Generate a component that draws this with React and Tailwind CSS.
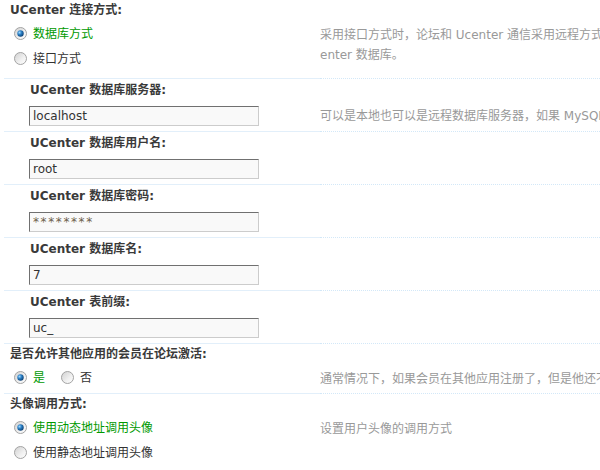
import React from "react";

function Radio({ checked }) {
  return (
    <svg width="13" height="13" viewBox="0 0 13 13" className="shrink-0">
      <defs>
        <linearGradient id="rgbg" x1="0" y1="0" x2="1" y2="1">
          <stop offset="0" stopColor="#cfcfcf" />
          <stop offset="0.6" stopColor="#f1f1f1" />
          <stop offset="1" stopColor="#ffffff" />
        </linearGradient>
        <radialGradient id="rgdot" cx="0.35" cy="0.35" r="0.7">
          <stop offset="0" stopColor="#9fd8ff" />
          <stop offset="0.45" stopColor="#2a7fc4" />
          <stop offset="1" stopColor="#0c3f73" />
        </radialGradient>
      </defs>
      <circle cx="6.5" cy="6.5" r="6" fill="url(#rgbg)" stroke="#a3a3a3" strokeWidth="1" />
      {checked && <circle cx="6.5" cy="6.5" r="3.2" fill="url(#rgdot)" />}
    </svg>
  );
}

function GroupHeader({ children, sub }) {
  return (
    <div
      className={
        sub
          ? "h-[23px] leading-[23px] pl-[26px] font-bold text-[#3a3a3a] whitespace-nowrap"
          : "h-[21px] leading-[21px] pl-[6px] font-bold text-[#3a3a3a] whitespace-nowrap"
      }
    >
      {children}
    </div>
  );
}

function Desc({ lines }) {
  return (
    <div className="flex-1 min-w-0 border-b border-dotted border-[#d3e8f8] pt-[4px] leading-[20px] text-[#999] whitespace-nowrap overflow-hidden">
      {lines.map((l, i) => (
        <div key={i}>{l}</div>
      ))}
    </div>
  );
}

function InputGroup({ label, value, desc, password }) {
  return (
    <div>
      <GroupHeader sub>{label}</GroupHeader>
      <div className="flex">
        <div className="w-[316px] shrink-0 border-b border-[#e2effa] pl-[25px] pt-[4px] pb-[5px]">
          <input
            readOnly
            value={value}
            className={
              password
                ? "block w-[230px] h-[20px] px-[3px] bg-[#f9f9f9] text-[#6e5f4c] tracking-[1.6px] text-[12px] outline-none border border-t-[#707070] border-l-[#707070] border-r-[#cccccc] border-b-[#cccccc]"
                : "block w-[230px] h-[20px] px-[3px] bg-[#f9f9f9] text-[#333] text-[12px] outline-none border border-t-[#707070] border-l-[#707070] border-r-[#cccccc] border-b-[#cccccc]"
            }
          />
        </div>
        <Desc lines={desc ? [desc] : []} />
      </div>
    </div>
  );
}

export default function App() {
  return (
    <div className="w-[600px] h-[470px] overflow-hidden bg-white text-[12px] font-['DejaVu_Sans','Noto_Sans_CJK_SC',sans-serif]">
      <div className="pl-[4px] w-[900px]">
        {/* Group 1 */}
        <GroupHeader>UCenter 连接方式:</GroupHeader>
        <div className="flex">
          <div className="w-[316px] shrink-0 border-b border-[#e2effa] pb-[7px]">
            <ul>
              <li className="h-[25px] flex items-center pl-[10px]">
                <Radio checked />
                <span className="ml-[6px] text-[#009900]">数据库方式</span>
              </li>
              <li className="h-[25px] flex items-center pl-[10px]">
                <Radio />
                <span className="ml-[6px] text-[#333]">接口方式</span>
              </li>
            </ul>
          </div>
          <Desc
            lines={[
              "采用接口方式时，论坛和 Ucenter 通信采用远程方式，如果您的服务器不支持请选择数据库方式直接连接 Uc",
              "enter 数据库。",
            ]}
          />
        </div>

        <InputGroup
          label="UCenter 数据库服务器:"
          value="localhost"
          desc="可以是本地也可以是远程数据库服务器，如果 MySQL 端口不是默认的 3306，请填写如下形式：127.0.0.1:6033"
        />
        <InputGroup label="UCenter 数据库用户名:" value="root" />
        <InputGroup label="UCenter 数据库密码:" value="********" password />
        <InputGroup label="UCenter 数据库名:" value="7" />
        <InputGroup label="UCenter 表前缀:" value="uc_" />

        {/* Group 7 */}
        <GroupHeader>是否允许其他应用的会员在论坛激活:</GroupHeader>
        <div className="flex">
          <div className="w-[316px] shrink-0 border-b border-[#e2effa] pb-[3px]">
            <div className="h-[25px] flex items-center pl-[10px]">
              <Radio checked />
              <span className="ml-[6px] text-[#009900]">是</span>
              <span className="ml-[16px]">
                <Radio />
              </span>
              <span className="ml-[6px] text-[#333]">否</span>
            </div>
          </div>
          <Desc
            lines={[
              "通常情况下，如果会员在其他应用注册了，但是他还不是本论坛的会员，那么他在论坛登录时需要激活",
            ]}
          />
        </div>

        {/* Group 8 */}
        <GroupHeader>头像调用方式:</GroupHeader>
        <div className="flex">
          <div className="w-[316px] shrink-0 border-b border-[#e2effa] pb-[7px]">
            <ul>
              <li className="h-[25px] flex items-center pl-[10px]">
                <Radio checked />
                <span className="ml-[6px] text-[#009900]">使用动态地址调用头像</span>
              </li>
              <li className="h-[25px] flex items-center pl-[10px]">
                <Radio />
                <span className="ml-[6px] text-[#333]">使用静态地址调用头像</span>
              </li>
            </ul>
          </div>
          <Desc lines={["设置用户头像的调用方式"]} />
        </div>
      </div>
    </div>
  );
}
